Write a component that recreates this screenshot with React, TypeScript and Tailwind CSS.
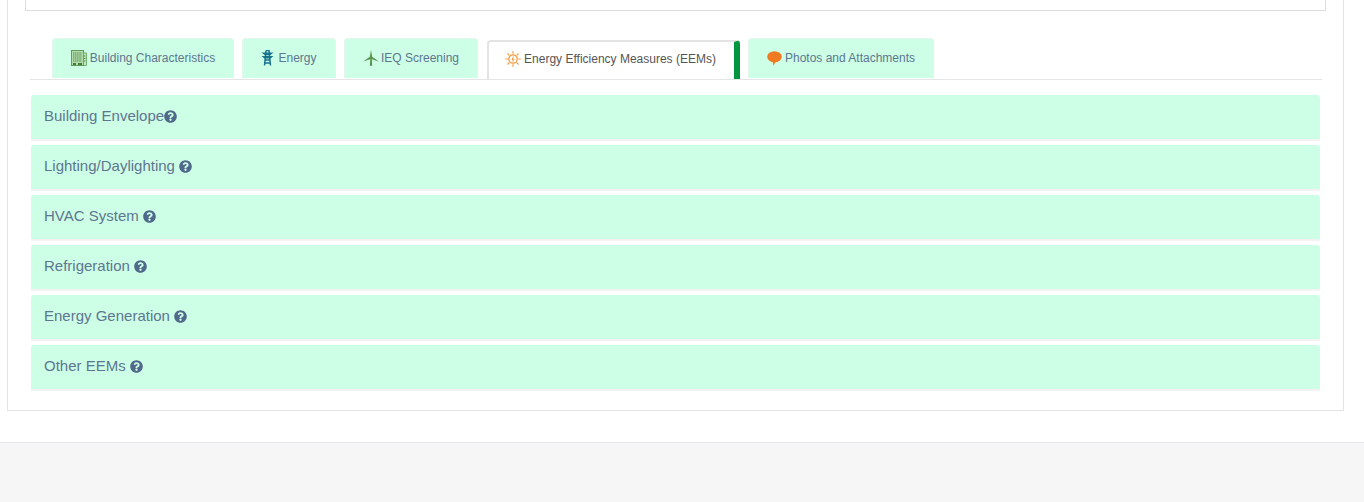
import React from 'react';
import { FaQuestionCircle } from 'react-icons/fa';

const BuildingIcon = () => (
  <svg width="16" height="16" viewBox="0 0 16 16" className="shrink-0">
    <rect x="0.500" y="0.500" width="12" height="15" fill="#b5dcae" stroke="#5f9e58" />
    <rect x="12.500" y="3" width="3" height="12.500" fill="#c5e8c0" stroke="#5f9e58" strokeWidth="0.800" />
    <path d="M2 3h9M2 5h9M2 7h9M2 9h9M2 11h9M13 6h2M13 8.500h2M13 11h2" stroke="#4f8f49" strokeWidth="1" strokeDasharray="1.300 0.500" />
    <path d="M2 14h3M7 14h4" stroke="#3f7f3a" strokeWidth="2" />
  </svg>
);

const PylonIcon = () => (
  <svg width="13" height="16" viewBox="0 0 13 16" className="shrink-0">
    <path d="M5 0.500h3L9.500 15.500M5 0.500L3.500 15.500M4.500 6.500h4M4 10h5M3.800 13h5.400" fill="none" stroke="#17728f" strokeWidth="1.500" />
    <path d="M0.500 2.500h12L9.500 5h-6zM0.500 6h12L9.500 8.500h-6z" fill="#17728f" />
  </svg>
);

const TurbineIcon = () => (
  <svg width="16" height="16" viewBox="0 0 16 16" className="shrink-0">
    <path d="M8 0L9.200 6.800L15.800 11.500L8.800 9.200L9.200 15.800H6.800L7.200 9.200L0.200 11.500L6.800 6.800z" fill="#5a9650" />
  </svg>
);

const SunIcon = () => (
  <svg width="16" height="16" viewBox="0 0 16 16" className="shrink-0">
    <circle cx="8" cy="8" r="4.200" fill="none" stroke="#f59a3e" strokeWidth="1.300" />
    <path d="M8 0.300v2.500M8 13.200v2.500M0.300 8h2.500M13.200 8h2.500M2.500 2.500l1.800 1.800M11.700 11.700l1.800 1.800M13.500 2.500l-1.800 1.800M4.300 11.700l-1.800 1.800" stroke="#f59a3e" strokeWidth="1.200" />
    <path d="M8.500 5.500L7 8.500h2L7.500 10.500" fill="none" stroke="#f59a3e" strokeWidth="1" />
  </svg>
);

const BubbleIcon = () => (
  <svg width="15" height="16" viewBox="0 0 15 16" className="shrink-0">
    <ellipse cx="7.500" cy="6.800" rx="7.300" ry="5.600" fill="#f07a22" />
    <path d="M5.500 11h3.500L6.500 15.800z" fill="#f07a22" />
  </svg>
);

const tabs = [
  { label: 'Building Characteristics', icon: <BuildingIcon />, width: 'w-[182px]', gap: 'gap-[3px]' },
  { label: 'Energy', icon: <PylonIcon />, width: 'w-[94px]', gap: 'gap-[4px]' },
  { label: 'IEQ Screening', icon: <TurbineIcon />, width: 'w-[134px]', gap: 'gap-[2px]' },
];

const sections = [
  { name: 'Building Envelope', gap: '' },
  { name: 'Lighting/Daylighting', gap: 'ml-1' },
  { name: 'HVAC System', gap: 'ml-1' },
  { name: 'Refrigeration', gap: 'ml-1' },
  { name: 'Energy Generation', gap: 'ml-1' },
  { name: 'Other EEMs', gap: 'ml-1' },
];

const inactiveTab =
  'h-[40px] pb-[2px] flex items-center justify-center bg-[#ccffe6] rounded-t-[4px] border border-b-0 border-[#e3f5ec] text-[12px] text-[#5f7590]';

export default function App() {
  return (
    <div className="min-h-[502px] bg-white flex flex-col font-['Liberation_Sans',Arial,sans-serif]">
      <div className="ml-[7px] mr-[20px] h-[411px] border-x border-b border-[#e3e3e8] px-[17px]">
        <div className="h-[11px] border-x border-b border-[#dddddd] bg-white" />
        <div className="mx-[4px] mt-[27px] pl-px">
          <div className="h-[42px] border-b border-[#e5e5e5] flex items-start pl-[22px]">
            {tabs.map((tab) => (
              <div key={tab.label} className={`${inactiveTab} ${tab.width} ${tab.gap} mr-[8px]`}>
                {tab.icon}
                <span>{tab.label}</span>
              </div>
            ))}
            <div className="ml-px mt-[2px] mr-[8px] h-[39px] w-[253px] pb-[4px] flex items-center justify-center gap-[3px] bg-white rounded-t-[4px] border-2 border-b-0 border-[#e3e3e3] border-r-[6px] border-r-[#00963f] text-[12px] text-[#555555] pr-[2px]">
              <SunIcon />
              <span>Energy Efficiency Measures (EEMs)</span>
            </div>
            <div className={`${inactiveTab} w-[186px] gap-[3px]`}>
              <BubbleIcon />
              <span>Photos and Attachments</span>
            </div>
          </div>
          <div className="mt-[15px] ml-px mr-[2px] flex flex-col gap-[6px]">
            {sections.map((section) => (
              <div
                key={section.name}
                className="h-[44px] pb-[2px] bg-[#ccffe6] rounded-t-[3px] pl-[13px] flex items-center text-[15px] text-[#5f7590] shadow-[0_2px_1px_rgba(0,0,0,0.05)]"
              >
                <span>{section.name}</span>
                <FaQuestionCircle className={`${section.gap} text-[13px] text-[#50688a]`} />
              </div>
            ))}
          </div>
        </div>
      </div>
      <div className="mt-[31px] h-[60px] border-t border-[#e5e5ea] bg-[#f6f6f6]" />
    </div>
  );
}
